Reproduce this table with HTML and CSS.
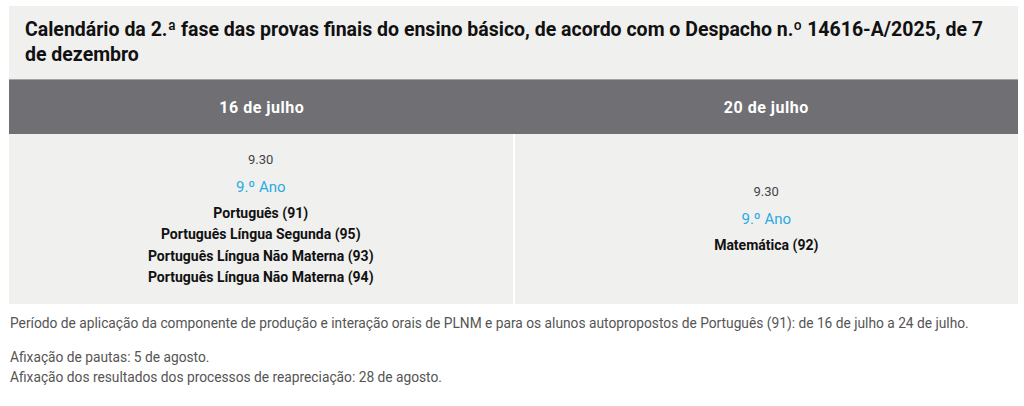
FILE: index.html
```html
<!DOCTYPE html>
<html lang="pt">
<head>
<meta charset="utf-8">
<title>Calendário</title>
<link rel="stylesheet" href="styles.css">
</head>
<body>
<div class="calendar">
  <div class="caption">Calendário da 2.ª fase das provas finais do ensino básico, de acordo com o Despacho n.º 14616-A/2025, de 7 de dezembro</div>
  <div class="grid">
    <div class="head">16 de julho</div>
    <div class="head">20 de julho</div>
    <div class="cell">
      <div class="time">9.30</div>
      <div class="year">9.º Ano</div>
      <div class="subject">Português (91)</div>
      <div class="subject">Português Língua Segunda (95)</div>
      <div class="subject">Português Língua Não Materna (93)</div>
      <div class="subject">Português Língua Não Materna (94)</div>
    </div>
    <div class="cell">
      <div class="time">9.30</div>
      <div class="year">9.º Ano</div>
      <div class="subject">Matemática (92)</div>
    </div>
  </div>
</div>
<div class="notes">
  <p>Período de aplicação da componente de produção e interação orais de PLNM e para os alunos autopropostos de Português (91): de 16 de julho a 24 de julho.</p>
  <p>Afixação de pautas: 5 de agosto.<br>Afixação dos resultados dos processos de reapreciação: 28 de agosto.</p>
</div>
</body>
</html>
```

FILE: styles.css
```css
html, body {
  margin: 0;
  padding: 0;
  background: #ffffff;
}
body {
  padding: 6px 6px 0 9px;
  font-family: Roboto, "Noto Sans", sans-serif;
}
.calendar {
  background: #f0f0ef;
}
.caption {
  padding: 11px 28px 12px 16px;
  font-size: 19.5px;
  line-height: 25px;
  font-weight: 700;
  color: #111111;
}
.grid {
  display: grid;
  grid-template-columns: 1fr 1fr;
  column-gap: 2px;
  background: #ffffff;
}
.head {
  background: #707074;
  border-top: 1px solid #a3a3a6;
  height: 54px;
  display: flex;
  align-items: center;
  justify-content: center;
  color: #ffffff;
  font-weight: 700;
  font-size: 16px;
  letter-spacing: 0.5px;
}
.head:first-child {
  margin-right: -2px;
}
.cell {
  background: #f0f0ef;
  height: 170px;
  display: flex;
  flex-direction: column;
  align-items: center;
  justify-content: center;
  text-align: center;
}
.time {
  font-size: 13px;
  line-height: 20px;
  color: #444444;
  margin-bottom: 6px;
}
.year {
  font-size: 15px;
  line-height: 22px;
  color: #29abe2;
  margin-bottom: 5px;
}
.subject {
  font-size: 14px;
  line-height: 21.5px;
  font-weight: 700;
  color: #111111;
}
.notes {
  padding-top: 9px;
  padding-left: 1px;
  font-size: 13.75px;
  line-height: 20px;
  color: #555555;
}
.notes p {
  margin: 0 0 14px 0;
}
```
